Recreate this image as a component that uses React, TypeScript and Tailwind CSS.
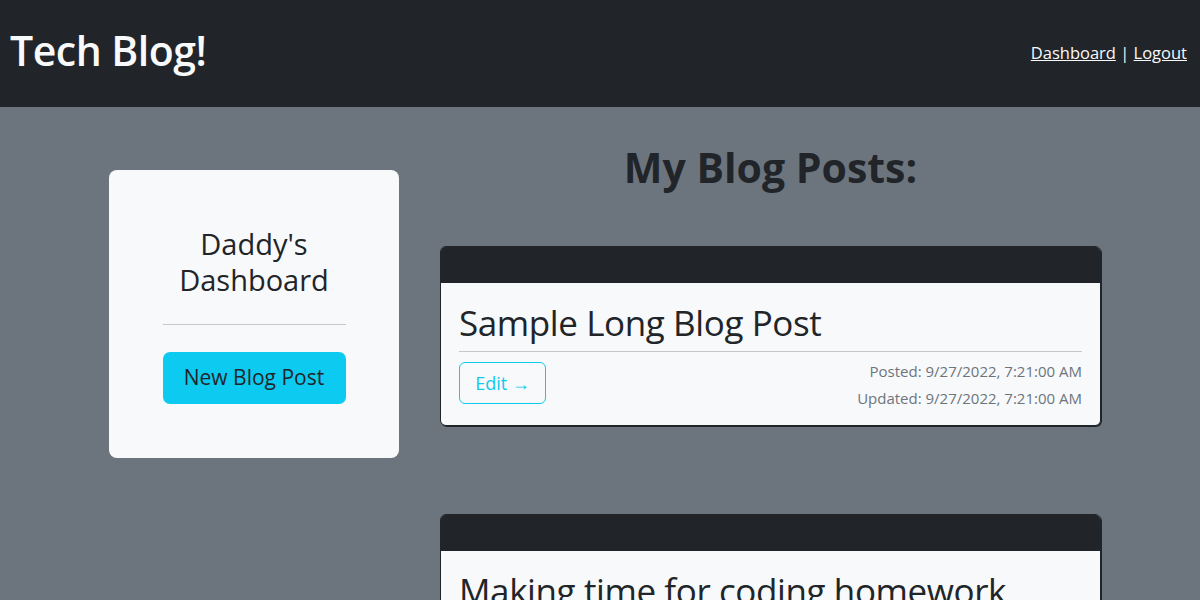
import React from "react";

const font = { fontFamily: '"Open Sans", "Noto Sans", sans-serif' };

function PostCard({ title, showMeta = true }: { title: string; showMeta?: boolean }) {
  return (
    <div className="w-[661px] rounded-[6px] overflow-hidden shadow-[1px_1px_0_#212529] border border-[#212529]">
      <div className="h-[36px] bg-[#212529]" />
      <div className="bg-[#f8f9fa] px-[18px] pt-[19px] pb-[13px]">
        <h2 className="text-[35px] leading-[1.2] text-[#212529] tracking-[-0.4px]">{title}</h2>
        <div className="mt-[7px] border-t border-[#c6c8ca]" />
        {showMeta && (
          <div className="flex justify-between items-start mt-[10px]">
            <button className="h-[42px] w-[87px] rounded-[6px] border border-[#0dcaf0] text-[#0dcaf0] text-[18px]">
              Edit →
            </button>
            <div className="text-right text-[15px] leading-[27px] text-[#6c757d] -mt-[4px]">
              <div>Posted: 9/27/2022, 7:21:00 AM</div>
              <div>Updated: 9/27/2022, 7:21:00 AM</div>
            </div>
          </div>
        )}
      </div>
    </div>
  );
}

export default function App() {
  return (
    <div className="min-h-[600px] bg-[#6c757d] overflow-hidden" style={font}>
      <header className="h-[107px] bg-[#212529] flex items-center justify-between pl-[10px] pr-[13px]">
        <h1 className="text-[41px] font-semibold text-[#f8f9fa] tracking-[-0.5px] -mt-[6px]">Tech Blog!</h1>
        <nav className="text-[16.5px] text-[#f8f9fa] -mt-[1px]">
          <a className="underline">Dashboard</a> | <a className="underline">Logout</a>
        </nav>
      </header>
      <main className="flex items-start pl-[109px]">
        <div className="mt-[63px] w-[290px] rounded-[8px] bg-[#f8f9fa] flex flex-col items-center pt-[56px] pb-[54px]">
          <h3 className="text-[29px] leading-[36px] text-[#212529] text-center">
            Daddy's
            <br />
            Dashboard
          </h3>
          <div className="w-[183px] mt-[26px] border-t border-[#c6c8ca]" />
          <button className="mt-[27px] w-[183px] h-[52px] rounded-[7px] bg-[#0dcaf0] text-[21px] text-[#212529]">
            New Blog Post
          </button>
        </div>
        <div className="ml-[41px] flex flex-col items-center">
          <h2 className="mt-[36px] text-[41px] font-bold text-[#212529] leading-[1.2]">My Blog Posts:</h2>
          <div className="mt-[54px] flex flex-col gap-[88px]">
            <PostCard title="Sample Long Blog Post" />
            <PostCard title="Making time for coding homework" />
          </div>
        </div>
      </main>
    </div>
  );
}
